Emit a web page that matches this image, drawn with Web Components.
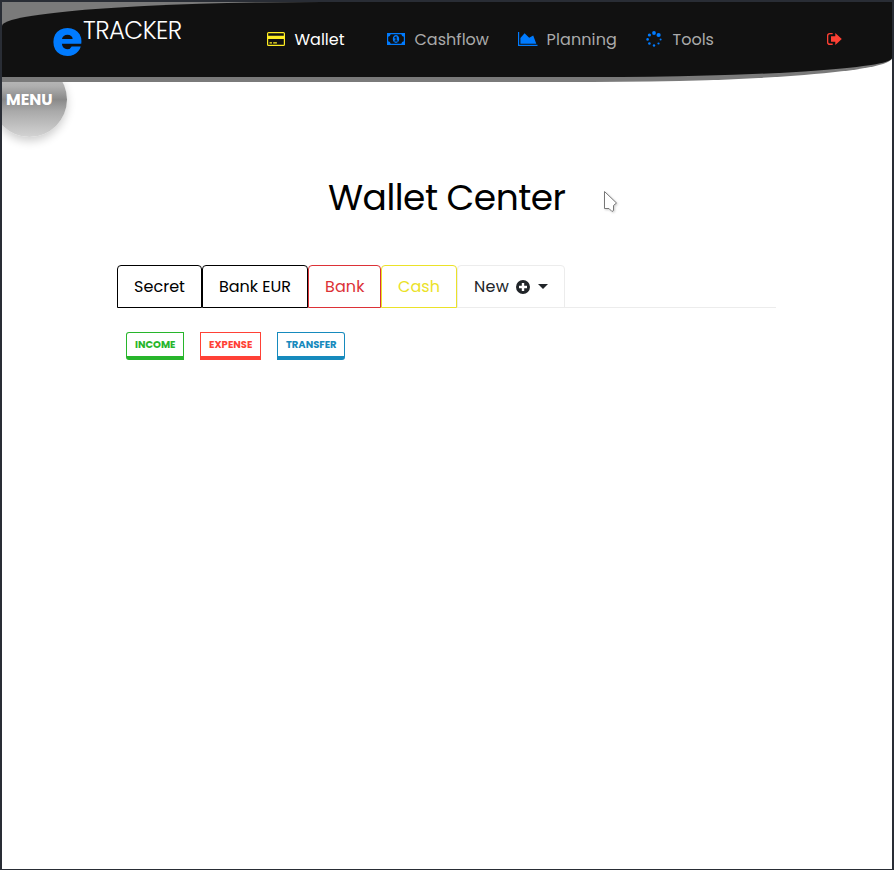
<!DOCTYPE html>
<html lang="en">
<head>
<meta charset="utf-8">
<title>eTracker</title>
<style>
html,body{margin:0;height:100%;overflow:hidden}
body{font-family:Poppins,Inter,"Open Sans",sans-serif;font-feature-settings:"cv11";font-size:16px;background:#fff}
</style>
</head>
<body>
<tracker-app></tracker-app>
<script>
const define = (name, html, setup) => {
  const tpl = document.createElement('template');
  tpl.innerHTML = html;
  customElements.define(name, class extends HTMLElement {
    connectedCallback() {
      if (this.shadowRoot) return;
      this.attachShadow({mode: 'open'}).append(tpl.content.cloneNode(true));
      if (setup) setup(this, this.shadowRoot);
    }
  });
};

const icons = {
  card: ['0 0 18 14', '<path fill-rule="evenodd" d="M1.6 0H16.4Q18 0 18 1.6V12.4Q18 14 16.4 14H1.6Q0 14 0 12.4V1.6Q0 0 1.6 0ZM1.2 1.3V3.8H16.8V1.3ZM1.2 7V12.8H16.8V7ZM2.5 10.3H5V11.6H2.5ZM6.2 10.3H9.9V11.6H6.2Z"/>'],
  note: ['0 0 18 12', '<path fill-rule="evenodd" d="M0 0H18V12H0ZM3.7 1.2Q3.2 3.4 1.2 3.7V8.3Q3.2 8.6 3.7 10.8H14.3Q14.8 8.6 16.8 8.3V3.7Q14.8 3.4 14.3 1.2ZM9 2.1C7.2 2.1 5.8 3.8 5.8 6S7.2 9.9 9 9.9 12.2 8.2 12.2 6 10.8 2.1 9 2.1ZM8.5 3.5H9.7V7.4H10.7V8.4H7.4V7.4H8.4V5L7.6 5.5 7.1 4.8Z"/>'],
  chart: ['0 0 20 14', '<path d="M0 0H1.2V12.8H19.5V14H0ZM2.4 11.8V6L6.6 1.3 11.2 5.8 15.2 3.6 18.3 11.8Z"/>'],
  spin: ['0 0 16 16', '<circle cx="8" cy="2" r="1.9"/><circle cx="12.6" cy="4" r="2.1"/><circle cx="3.4" cy="4" r="1.6"/><circle cx="1.6" cy="8.4" r="1.3"/><circle cx="14.6" cy="8.4" r="1"/><circle cx="3.4" cy="12.5" r="1.3"/><circle cx="12.5" cy="12.5" r="1.1"/><circle cx="8" cy="14.5" r="1.2"/>'],
  exit: ['0 0 15 12', '<path d="M5.7 0V1.2H2.8Q1.3 1.2 1.3 2.7V9.1Q1.3 10.6 2.8 10.6H5.7V12H2.8Q0 12 0 9.2V2.8Q0 0 2.8 0ZM8.3 0 14.8 6 8.3 12V8.7H4V3.3H8.3Z"/>'],
  plus: ['0 0 14 14', '<path fill-rule="evenodd" d="M7 0A7 7 0 1 1 7 14A7 7 0 0 1 7 0ZM5.8 3V5.8H3V8.2H5.8V11H8.2V8.2H11V5.8H8.2V3Z"/>'],
  caret: ['0 0 10 5', '<path d="M0 0H10L5 5Z"/>']
};
define('ui-icon', '<style>:host{display:inline-flex;flex:none}svg{display:block;fill:currentColor}</style><svg></svg>', (el, root) => {
  const svg = root.querySelector('svg'), [box, art] = icons[el.getAttribute('name')];
  svg.setAttribute('viewBox', box);
  svg.setAttribute('width', box.split(' ')[2]);
  svg.setAttribute('height', box.split(' ')[3]);
  svg.innerHTML = art;
});

/* A label whose tracking is adjusted to fill a given width. */
define('fit-text', '<style>:host{display:inline-block;white-space:nowrap;flex:none}span{display:inline-block}</style><span><slot></slot></span>', (el, root) => {
  const span = root.querySelector('span'), w = +el.getAttribute('width');
  span.style.letterSpacing = '0px';
  span.style.letterSpacing = (w - span.getBoundingClientRect().width) / el.textContent.length + 'px';
  el.style.width = w + 'px';
});

define('nav-link', `<style>:host{display:flex;align-items:center;color:#aaa;line-height:24px}
 :host([active]){color:#fff}ui-icon{color:#007bff;width:var(--iw,28px)}:host([active]) ui-icon{color:#ffed22}</style>
 <slot></slot>`, (el, root) => {
  const i = document.createElement('ui-icon');
  i.setAttribute('name', el.getAttribute('icon'));
  root.querySelector('slot').before(i);
});

define('app-header', `<style>
 :host{display:block;height:80px;background:#7a7a7a;border-bottom-right-radius:300px 24px;position:relative;z-index:2}
 .bar{box-sizing:border-box;height:75px;background:#111;border-radius:320px 0 300px 0 / 24px 0 19px 0;display:flex;padding-left:50px;align-items:flex-start}
 .brand{display:flex;width:215px;color:#fff}
 .e{font-weight:700;font-size:50px;line-height:50px;color:#007bff;margin-top:12px}
 .name{font-weight:300;font-size:24.5px;line-height:30px;margin-top:14px;margin-left:1px}
 nav{display:flex;padding-top:24px}
 nav fit-text{padding-top:2px}
 ui-icon{color:#ff4033;margin:31px 0 0 auto;padding-right:50px}
 </style><div class="bar"><div class="brand"><fit-text class="e" width="30">e</fit-text><fit-text class="name" width="98.5">TRACKER</fit-text></div>
 <nav>
 <nav-link icon="card" active style="width:120px;--iw:27.5px"><fit-text width="50">Wallet</fit-text></nav-link>
 <nav-link icon="note" style="width:131px;--iw:27.5px"><fit-text width="74.5">Cashflow</fit-text></nav-link>
 <nav-link icon="chart" style="width:128px;--iw:28.5px"><fit-text width="70.5">Planning</fit-text></nav-link>
 <nav-link icon="spin" style="--iw:26.5px"><fit-text width="41.5">Tools</fit-text></nav-link>
 </nav><ui-icon name="exit"></ui-icon></div>`);

define('menu-bubble', `<style>
 :host{position:absolute;left:-10px;top:60px;width:75px;height:75px;border-radius:50%;z-index:1;background:linear-gradient(#ccc,#b0b0b0 32%,#898989 50%,#aaa 66%,#d3d3d3);box-shadow:0 4px 10px rgba(0,0,0,.2);
 box-sizing:border-box;padding:27px 0 0 14px;color:#fff;font-weight:700;font-size:16px;line-height:22px}
 </style><slot></slot>`);

define('tab-item', `<style>:host{box-sizing:border-box;display:flex;align-items:center;height:43px;border:1px solid var(--c);border-radius:4px 4px 0 0;padding:0 0 0 16px;color:var(--t,var(--c))}</style><slot></slot>`);
define('tab-bar', `<style>:host{display:flex;width:659px;margin:43px 0 0 115px;box-shadow:inset 0 -1px #ececec}</style><slot></slot>`);
define('action-button', `<style>:host{box-sizing:border-box;height:28px;border:1px solid;border-bottom-width:4px;padding:4px 0 0 8px;font-size:10px;line-height:15px;font-weight:700}</style><slot></slot>`);

define('pointer-cursor', `<style>:host{position:absolute;left:601px;top:188px;filter:drop-shadow(1px 1px 1px #0003)}svg{display:block}</style>
 <svg width="15" height="24"><path d="M1.5 1.5V18.5H6L9 21.5 10.5 20.5V15.5L13.5 13Z" fill="#fff" stroke="#777"/></svg>`);

define('tracker-app', `<style>
 :host{display:block;box-sizing:border-box;position:relative;width:894px;height:870px;border:2px solid #292d35;border-bottom-width:1px;overflow:hidden;background:#fff}
 :host::before{content:"";position:absolute;left:0;right:0;top:-1px;height:1px;background:#5b5f67;z-index:3}
 .frame{position:relative;overflow:hidden;height:867px}
 h1{margin:92px 0 0 326px;height:48px;font-weight:400;font-size:36px;line-height:48px;color:#000}
 .actions{display:flex;gap:16px;margin:24px 0 0 124px}
 </style>
 <div class="frame"><app-header></app-header><menu-bubble><fit-text width="46.5">MENU</fit-text></menu-bubble>
 <h1><fit-text width="237.5">Wallet Center</fit-text></h1>
 <tab-bar>
 <tab-item style="width:85px;--c:#000"><fit-text width="51">Secret</fit-text></tab-item>
 <tab-item style="width:106px;--c:#000"><fit-text width="72">Bank EUR</fit-text></tab-item>
 <tab-item style="width:73px;--c:#dc3237"><fit-text width="39.5">Bank</fit-text></tab-item>
 <tab-item style="width:76px;--c:#ebe229"><fit-text width="42">Cash</fit-text></tab-item>
 <tab-item style="width:108px;--c:#ececec;--t:#212529"><fit-text width="35">New</fit-text><ui-icon name="plus" style="margin:0 8px 0 7px"></ui-icon><ui-icon name="caret"></ui-icon></tab-item>
 </tab-bar>
 <div class="actions">
 <action-button style="width:58px;color:#27b52b;border-radius:3px 0 0 3px"><fit-text width="40.5">INCOME</fit-text></action-button>
 <action-button style="width:61px;color:#ff4136"><fit-text width="43.5">EXPENSE</fit-text></action-button>
 <action-button style="width:68px;color:#168abd;border-radius:0 3px 3px 0"><fit-text width="50.5">TRANSFER</fit-text></action-button>
 </div><pointer-cursor></pointer-cursor></div>`);
</script>
</body>
</html>
